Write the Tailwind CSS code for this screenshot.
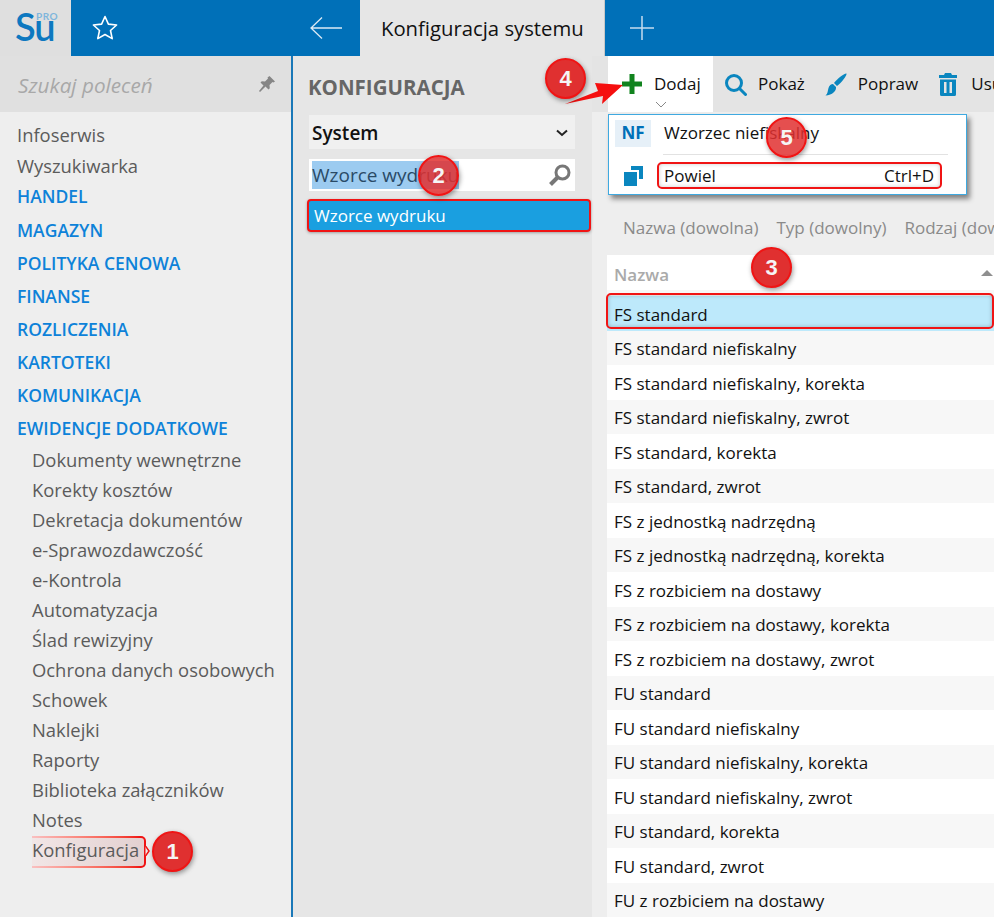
<!DOCTYPE html>
<html lang="pl">
<head>
  <meta charset="UTF-8" />
  <script src="https://cdn.jsdelivr.net/npm/@tailwindcss/browser@4"></script>
  <title>Konfiguracja systemu</title>
</head>
<body class="relative w-[994px] h-[917px] overflow-hidden bg-[#eeeeee] font-['Open_Sans','Noto_Sans',sans-serif] text-[17px] text-[#111]">

  <!-- Top bar -->
  <header class="flex h-14 bg-[#0070b8]">
    <div class="relative w-[71px] bg-[#dfdfdf] font-['Lato',sans-serif] text-[#0d78c0]">
      <span class="absolute left-[15px] top-[3px] text-[38px] leading-[46px] font-semibold tracking-[-1px]">Su</span>
      <span class="absolute left-[36px] top-[10px] text-[10px] leading-[12px] font-bold tracking-[0.5px] text-[#7fb6dc]">PRO</span>
    </div>
    <div class="flex w-[289px] items-center pl-[20px]">
      <svg class="shrink-0 w-[28px] h-[28px]" viewBox="0 0 28 28" fill="none" stroke="#fff" stroke-width="1.6" stroke-linejoin="round"><path d="M14 2.5l3.4 7.6 8.2.9-6.1 5.5 1.7 8.1-7.2-4.1-7.2 4.1 1.7-8.1L2.400 11l8.200-.9z"/></svg>
      <svg class="shrink-0 ml-[190px] w-[34px] h-[24px]" viewBox="0 0 34 24" fill="none" stroke="#dbeaf5" stroke-width="1.300"><path d="M2 12h31M13 1.500L2 12l11 10.500"/></svg>
    </div>
    <div class="flex w-[245px] items-center pl-[21px] bg-[#e6e6e6] border-r border-[#c8c8c8] text-[20.300px] whitespace-nowrap text-[#111]">Konfiguracja systemu</div>
    <div class="flex items-center pl-[24px]">
      <svg class="w-[26px] h-[26px]" viewBox="0 0 26 26" stroke="#c5dcee" stroke-width="1.500"><path d="M1 13h24M13 1v24"/></svg>
    </div>
  </header>

  <div class="flex h-[861px]">
    <!-- Left sidebar -->
    <aside class="w-[293px] shrink-0 border-r-2 border-[#1a78b8] bg-[#eeeeee] text-[18.400px] text-[#5b5b5b]">
      <div class="flex h-14 items-center justify-between bg-[#e0e0e0] pl-[18px] pr-[15px] pt-[3px] text-[20.700px] italic text-[#a8a8a8]">
        Szukaj poleceń
        <svg class="w-[18px] h-[18px] -mt-[3px]" viewBox="0 0 18 18" fill="#868686"><path d="M11.500 1l5.500 5.500-1.500 1-1-.5-3 3 .3 3.200-1.300 1.300-3-3L2 17l-1-1 4.500-5.500-3-3L3.800 6.200 7 6.500l3-3-.5-1z"/></svg>
      </div>
      <nav class="pt-[7px] pl-[17px]">
        <div class="h-[31px] leading-[31px]">Infoserwis</div>
        <div class="h-[31px] leading-[31px]">Wyszukiwarka</div>
        <div class="font-semibold text-[#0d82d9] text-[17.500px]">
          <div class="h-[33px] leading-[31px]">HANDEL</div>
          <div class="h-[33px] leading-[33px]">MAGAZYN</div>
          <div class="h-[33px] leading-[33px]">POLITYKA CENOWA</div>
          <div class="h-[33px] leading-[33px]">FINANSE</div>
          <div class="h-[33px] leading-[33px]">ROZLICZENIA</div>
          <div class="h-[33px] leading-[33px]">KARTOTEKI</div>
          <div class="h-[33px] leading-[33px]">KOMUNIKACJA</div>
          <div class="h-[33px] leading-[33px]">EWIDENCJE DODATKOWE</div>
        </div>
        <div class="pl-[15px]">
          <div class="h-[30px] leading-[30px]">Dokumenty wewnętrzne</div>
          <div class="h-[30px] leading-[30px]">Korekty kosztów</div>
          <div class="h-[30px] leading-[30px]">Dekretacja dokumentów</div>
          <div class="h-[30px] leading-[30px]">e-Sprawozdawczość</div>
          <div class="h-[30px] leading-[30px]">e-Kontrola</div>
          <div class="h-[30px] leading-[30px]">Automatyzacja</div>
          <div class="h-[30px] leading-[30px]">Ślad rewizyjny</div>
          <div class="h-[30px] leading-[30px]">Ochrona danych osobowych</div>
          <div class="h-[30px] leading-[30px]">Schowek</div>
          <div class="h-[30px] leading-[30px]">Naklejki</div>
          <div class="h-[30px] leading-[30px]">Raporty</div>
          <div class="h-[30px] leading-[30px]">Biblioteka załączników</div>
          <div class="h-[30px] leading-[30px]">Notes</div>
          <div class="h-[30px] leading-[30px]"><span class="relative z-10">Konfiguracja</span></div>
        </div>
      </nav>
    </aside>

    <!-- Middle panel -->
    <section class="w-[299px] shrink-0 bg-[#e6e6e6] pl-[15px] pr-[17px]">
      <h2 class="h-[59px] pt-[16px] text-[20.500px] leading-[30px] font-bold text-[#666]">KONFIGURACJA</h2>
      <div class="ml-[1px] flex h-[34px] w-[266px] items-center justify-between bg-[#f0f0f0] px-[3px] pt-[2px] font-semibold text-[19px] text-[#111]">
        System
        <svg class="mr-[4px] w-[12px] h-[8px]" viewBox="0 0 12 8" fill="none" stroke="#222" stroke-width="2"><path d="M1 1.500l5 4.500 5-4.500"/></svg>
      </div>
      <div class="ml-[1px] mt-[10px] flex h-[32px] w-[266px] items-center justify-between bg-white pl-[3px] pr-[3px]">
        <span class="bg-[#9ccbf0] text-[19px] text-[#2a4a66] leading-[28px]">Wzorce wydruku</span>
        <svg class="w-[24px] h-[24px]" viewBox="0 0 24 24" fill="none" stroke="#777" stroke-width="3"><circle cx="14.500" cy="9.500" r="6.500"/><path d="M9.500 14.500L2.500 21.500" stroke-width="4"/></svg>
      </div>
      <div class="mt-[9px] flex h-[31px] w-[282px] items-center bg-[#1a9fe0] pl-[6px] text-white">Wzorce wydruku</div>
    </section>

    <!-- Right panel -->
    <main class="relative min-w-0 flex-1 overflow-hidden bg-[#eeeeee]">
      <div class="flex h-14 items-center bg-[#e4e4e4] text-[17px] text-[#111] whitespace-nowrap">
        <div class="flex h-14 w-[105px] shrink-0 ml-[16px] items-center bg-white pl-[14px]">
          <svg class="w-[20px] h-[20px]" viewBox="0 0 20 20" fill="#11831e"><path d="M7.500 0h5v7.500H20v5h-7.500V20h-5v-7.500H0v-5h7.500z"/></svg>
          <span class="ml-[12px]">Dodaj</span>
        </div>
        <svg class="shrink-0 ml-[11px] w-[23px] h-[23px]" viewBox="0 0 23 23" fill="none" stroke="#0a86bf" stroke-width="3"><circle cx="10" cy="10" r="7.500"/><path d="M15.500 15.500L21.500 21.500" stroke-linecap="round"/></svg>
        <span class="ml-[11px]">Pokaż</span>
        <svg class="shrink-0 ml-[20px] w-[22px] h-[23px]" viewBox="0 0 22 23" fill="#0a86bf"><path d="M21.500.5c.5 2.500-5.500 9.500-9.500 12.500l-3-3C12 6 19.500 0 21.500.5zM8 11l3 3c.500 4-3.500 8-10.500 8.500 2.500-2 2-4.500 3-7.500.8-2.500 2.500-4 4.500-4z"/></svg>
        <span class="ml-[11px]">Popraw</span>
        <svg class="shrink-0 ml-[21px] w-[18px] h-[23px]" viewBox="0 0 18 23" fill="#0a86bf"><path d="M6 0h6l1 2h5v3H0V2h5zM1 6.500h16V21.500a1.500 1.500 0 0 1-1.500 1.500h-13A1.500 1.500 0 0 1 1 21.500zM5 9v11h2.500V9zm5.500 0v11H13V9z"/></svg>
        <span class="ml-[14px]">Usuń</span>
      </div>

      <div class="flex gap-[18px] pl-[31px] pt-[104px] h-[143px] text-[17px] leading-[24px] text-[#8a8a8a] whitespace-nowrap">
        <span>Nazwa (dowolna)</span><span>Typ (dowolny)</span><span>Rodzaj (dowolny)</span>
      </div>

      <div class="ml-[15px] text-[17px] text-[#111]">
        <div class="flex h-[35px] items-center justify-between bg-white pl-[7px] pr-[1px] pt-[4px] font-semibold text-[#aaa]">
          Nazwa
          <svg class="w-[12px] h-[6px] -mt-[4px]" viewBox="0 0 12 6" fill="#8f8f8f"><path d="M6 0l6 6H0z"/></svg>
        </div>
        <div class="h-[6px] bg-[#f7f7f7]"></div>
        <div class="flex h-[34.500px] items-center bg-[#bde9fb] pl-[7px] pt-[2px]">FS standard</div>
        <div class="flex h-[34.500px] items-center bg-[#f7f7f7] pl-[7px] pt-[2px]">FS standard niefiskalny</div>
        <div class="flex h-[34.500px] items-center bg-white pl-[7px] pt-[2px]">FS standard niefiskalny, korekta</div>
        <div class="flex h-[34.500px] items-center bg-[#f7f7f7] pl-[7px] pt-[2px]">FS standard niefiskalny, zwrot</div>
        <div class="flex h-[34.500px] items-center bg-white pl-[7px] pt-[2px]">FS standard, korekta</div>
        <div class="flex h-[34.500px] items-center bg-[#f7f7f7] pl-[7px] pt-[2px]">FS standard, zwrot</div>
        <div class="flex h-[34.500px] items-center bg-white pl-[7px] pt-[2px]">FS z jednostką nadrzędną</div>
        <div class="flex h-[34.500px] items-center bg-[#f7f7f7] pl-[7px] pt-[2px]">FS z jednostką nadrzędną, korekta</div>
        <div class="flex h-[34.500px] items-center bg-white pl-[7px] pt-[2px]">FS z rozbiciem na dostawy</div>
        <div class="flex h-[34.500px] items-center bg-[#f7f7f7] pl-[7px] pt-[2px]">FS z rozbiciem na dostawy, korekta</div>
        <div class="flex h-[34.500px] items-center bg-white pl-[7px] pt-[2px]">FS z rozbiciem na dostawy, zwrot</div>
        <div class="flex h-[34.500px] items-center bg-[#f7f7f7] pl-[7px] pt-[2px]">FU standard</div>
        <div class="flex h-[34.500px] items-center bg-white pl-[7px] pt-[2px]">FU standard niefiskalny</div>
        <div class="flex h-[34.500px] items-center bg-[#f7f7f7] pl-[7px] pt-[2px]">FU standard niefiskalny, korekta</div>
        <div class="flex h-[34.500px] items-center bg-white pl-[7px] pt-[2px]">FU standard niefiskalny, zwrot</div>
        <div class="flex h-[34.500px] items-center bg-[#f7f7f7] pl-[7px] pt-[2px]">FU standard, korekta</div>
        <div class="flex h-[34.500px] items-center bg-white pl-[7px] pt-[2px]">FU standard, zwrot</div>
        <div class="flex h-[34.500px] items-center bg-[#f7f7f7] pl-[7px] pt-[2px]">FU z rozbiciem na dostawy</div>
      </div>
    </main>
  </div>

  <!-- Dropdown menu -->
  <div class="absolute left-[608px] top-[114px] w-[359px] h-[81px] border border-[#3fa9e0] bg-white shadow-[3px_4px_5px_rgba(0,0,0,0.45)] text-[17px]">
    <div class="flex h-[39px] items-center pl-[6px] pb-[3px]">
      <span class="flex h-[27px] w-[36px] items-center justify-center bg-[#e6f0f8] font-bold text-[#0070b8]">NF</span>
      <span class="ml-[13px]">Wzorzec niefiskalny</span>
    </div>
    <div class="ml-[54px] w-[285px] border-t border-[#e2e2e2]"></div>
    <div class="flex items-center pl-[15px] pt-[7px]">
      <svg class="w-[19px] h-[20px]" viewBox="0 0 19 20" fill="#0a86bf"><path d="M0 6h13v14H0z"/><path d="M7 0h12v13h-4V4H7z"/></svg>
      <div class="ml-[14px] flex h-[27px] w-[285px] items-center justify-between pl-[7px] pr-[8px]"><span>Powiel</span><span>Ctrl+D</span></div>
    </div>
  </div>

  <!-- Annotations -->
  <div class="absolute left-[307px] top-[199px] w-[284px] h-[33px] rounded-[4px] border-2 border-[#f01414] shadow-[0_1px_3px_rgba(0,0,0,0.3)]"></div>
  <div class="absolute left-[606px] top-[293px] w-[388px] h-[36px] rounded-[5px] border-2 border-[#f01414] shadow-[inset_0_0_4px_rgba(0,0,0,0.25)]"></div>
  <div class="absolute left-[657px] top-[162px] w-[285px] h-[27px] rounded-[5px] border-2 border-[#f01414] shadow-[inset_0_0_4px_rgba(0,0,0,0.2)]"></div>

  <div class="absolute left-[32px] top-[836px] flex h-[32px] w-[114px]">
    <div class="relative flex-1 bg-gradient-to-r from-[#f6dada]/40 to-[#d9b4b4]/50">
      <div class="absolute inset-x-0 top-0 h-[2px] bg-gradient-to-r from-[#f9c0c0] to-[#f01414]"></div>
      <div class="absolute inset-x-0 bottom-0 h-[2px] bg-gradient-to-r from-[#f9c0c0] to-[#f01414]"></div>
    </div>
    <div class="w-[6px] rounded-r-[5px] border-y-2 border-r-2 border-[#f01414] bg-[#d9b4b4]/50"></div>
  </div>
  <svg class="absolute left-[145px] top-[846px] w-[5px] h-[10px]" viewBox="0 0 5 10" fill="#eeeeee" stroke="#f01414" stroke-width="1.500"><path d="M.5 0l3.500 5-3.500 5"/></svg>

  <svg class="absolute left-[560px] top-[78px] w-[66px] h-[30px]" viewBox="0 0 66 30" fill="#f50f0f"><path d="M5 26l33-13-3-8 28 2-21 19 1-8z"/></svg>

  <div class="absolute left-[152px] top-[831px] flex h-[41px] w-[41px] items-center justify-center rounded-full border-2 border-[#f01414] bg-[#e03030] font-['Liberation_Sans',sans-serif] text-[22px] font-bold text-[#f5f5f5] shadow-[1px_2px_5px_rgba(0,0,0,0.4)]">1</div>
  <div class="absolute left-[418px] top-[155px] flex h-[41px] w-[41px] items-center justify-center rounded-full border-2 border-[#f01414] bg-[#e03030]/85 font-['Liberation_Sans',sans-serif] text-[22px] font-bold text-[#f5f5f5] shadow-[1px_2px_5px_rgba(0,0,0,0.4)]">2</div>
  <div class="absolute left-[751px] top-[247px] flex h-[41px] w-[41px] items-center justify-center rounded-full border-2 border-[#f01414] bg-[#e03030] font-['Liberation_Sans',sans-serif] text-[22px] font-bold text-[#f5f5f5] shadow-[1px_2px_5px_rgba(0,0,0,0.4)]">3</div>
  <div class="absolute left-[545px] top-[58px] flex h-[41px] w-[41px] items-center justify-center rounded-full border-2 border-[#f01414] bg-[#e03030] font-['Liberation_Sans',sans-serif] text-[22px] font-bold text-[#f5f5f5] shadow-[1px_2px_5px_rgba(0,0,0,0.4)]">4</div>
  <div class="absolute left-[766px] top-[117px] flex h-[41px] w-[41px] items-center justify-center rounded-full border-2 border-[#f01414] bg-[#e03030]/85 font-['Liberation_Sans',sans-serif] text-[22px] font-bold text-[#f5f5f5] shadow-[1px_2px_5px_rgba(0,0,0,0.4)]">5</div>
  <svg class="absolute left-[655px] top-[101px] w-[12px] h-[7px]" viewBox="0 0 12 7" fill="none" stroke="#888" stroke-width="1"><path d="M1 1l5 5 5-5"/></svg>
</body>
</html>
